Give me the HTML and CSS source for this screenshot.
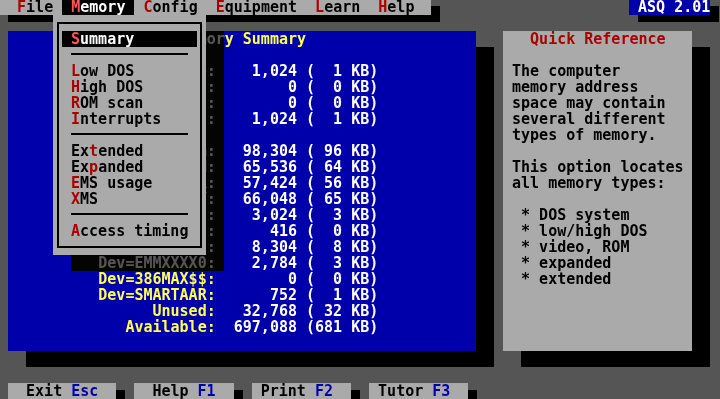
FILE: index.html
```html
<!DOCTYPE html>
<html lang="en">
<head>
  <meta charset="UTF-8" />
  <meta name="viewport" content="width=device-width, initial-scale=1" />
  <title>ASQ 2.01 - Memory Summary</title>
  <link rel="stylesheet" href="styles.css">
</head>
<body>
  <div class="screen">
    <div class="menubar">  <span class="hk">F</span>ile <span class="open"> <span class="hk">M</span>emory </span> <span class="hk">C</span>onfig  <span class="hk">E</span>quipment  <span class="hk">L</span>earn  <span class="hk">H</span>elp  </div>
    <div class="badge"> ASQ 2.01</div>

    <div class="summary"><div class="title">                   Memory Summary</div>
       <span class="lbl">Interrupt table:</span>    1,024 (  1 KB)
        <span class="lbl">BIOS data area:</span>        0 (  0 KB)
            <span class="lbl">DOS kernel:</span>        0 (  0 KB)
           <span class="lbl">DOS buffers:</span>    1,024 (  1 KB)

            <span class="lbl">DOS system:</span>   98,304 ( 96 KB)
             <span class="lbl">Dev=HIMEM:</span>   65,536 ( 64 KB)
            <span class="lbl">Dev=SETVER:</span>   57,424 ( 56 KB)
           <span class="lbl">Dev=DISPLAY:</span>   66,048 ( 65 KB)
              <span class="lbl">Dev=ANSI:</span>    3,024 (  3 KB)
          <span class="lbl">Dev=RAMDRIVE:</span>      416 (  0 KB)
           <span class="lbl">Dev=MSCD001:</span>    8,304 (  8 KB)
          <span class="lbl">Dev=EMMXXXX0:</span>    2,784 (  3 KB)
          <span class="lbl">Dev=386MAX$$:</span>        0 (  0 KB)
          <span class="lbl">Dev=SMARTAAR:</span>      752 (  1 KB)
                <span class="lbl">Unused:</span>   32,768 ( 32 KB)
             <span class="lbl">Available:</span>  697,088 (681 KB)</div>

    <div class="quickref"><div class="title">   Quick Reference</div>
 The computer
 memory address
 space may contain
 several different
 types of memory.

 This option locates
 all memory types:

  * DOS system
  * low/high DOS
  * video, ROM
  * expanded
  * extended</div>

    <div class="keys">
      <div class="key">  Exit <span class="fk">Esc</span>  </div>
      <div class="key">  Help <span class="fk">F1</span>  </div>
      <div class="key"> Print <span class="fk">F2</span>  </div>
      <div class="key"> Tutor <span class="fk">F3</span>  </div>
    </div>

    <div class="drop-shadow"></div>
    <div class="dropdown">
      <div class="frame">
        <div class="item sel"> <span class="hk">S</span>ummary</div>
        <div class="sep"></div>
        <div class="item"> <span class="hk">L</span>ow DOS</div>
        <div class="item"> <span class="hk">H</span>igh DOS</div>
        <div class="item"> <span class="hk">R</span>OM scan</div>
        <div class="item"> <span class="hk">I</span>nterrupts</div>
        <div class="sep"></div>
        <div class="item"> Ex<span class="hk">t</span>ended</div>
        <div class="item"> Ex<span class="hk">p</span>anded</div>
        <div class="item"> <span class="hk">E</span>MS usage</div>
        <div class="item"> <span class="hk">X</span>MS</div>
        <div class="sep"></div>
        <div class="item"> <span class="hk">A</span>ccess timing</div>
      </div>
    </div>
  </div>
</body>
</html>
```

FILE: styles.css
```css
* { box-sizing: border-box; }
body { margin: 0; background: #555555; overflow: hidden; }

/* 80x25 text screen, 9x16 cells */
.screen {
  display: grid;
  grid-template-columns: repeat(80, 9px);
  grid-template-rows: repeat(25, 16px);
  width: 720px; height: 400px;
  margin: -1px 0 0 -1px;
  font: bold 15px/16px "DejaVu Sans Mono", monospace;
  color: #000000;
}
.menubar, .badge, .summary, .quickref, .key, .item { white-space: pre; }

.hk { color: #aa0000; }

.menubar {
  grid-area: 1 / 1 / 2 / 49;
  background: #aaaaaa;
  box-shadow: 9px 7px 0 #000000;
}
.menubar .open { display: inline-block; height: 16px; background: #000000; color: #ffffff; }
.menubar .open .hk { color: #ff5555; }

.badge {
  grid-area: 1 / 71 / 2 / 80;
  background: #0000aa; color: #ffffff;
  box-shadow: 9px 7px 0 #000000;
}

.summary {
  grid-area: 3 / 2 / 23 / 54;
  background: #0000aa; color: #ffffff;
  box-shadow: 18px 16px 0 #000000;
}
.summary .title, .summary .lbl { color: #ffff55; }

.quickref {
  grid-area: 3 / 57 / 23 / 78;
  background: #aaaaaa; color: #000000;
  box-shadow: 18px 16px 0 #000000;
}
.quickref .title { color: #aa0000; }

.keys {
  grid-area: 25 / 2 / 26 / 60;
  display: flex; gap: 18px;
}
.key { height: 16px; background: #aaaaaa; box-shadow: 9px 7px 0 #000000; }
.key .fk { color: #0000aa; }

/* shadow of the open menu dims what lies under it */
.drop-shadow {
  grid-area: 3 / 9 / 18 / 26;
  z-index: 1;
  backdrop-filter: grayscale(1) brightness(0.35);
}
.dropdown {
  grid-area: 2 / 7 / 17 / 24;
  z-index: 2;
  background: #aaaaaa;
  padding: 7px 4px;
}
.frame { height: 100%; border: 2px solid #000000; padding: 7px 3px; }
.item { height: 16px; }
.item.sel { background: #000000; color: #ffffff; }
.item.sel .hk { color: #ff5555; }
.sep { width: 117px; height: 2px; margin: 6px 0 8px 9px; background: #000000; }
```
